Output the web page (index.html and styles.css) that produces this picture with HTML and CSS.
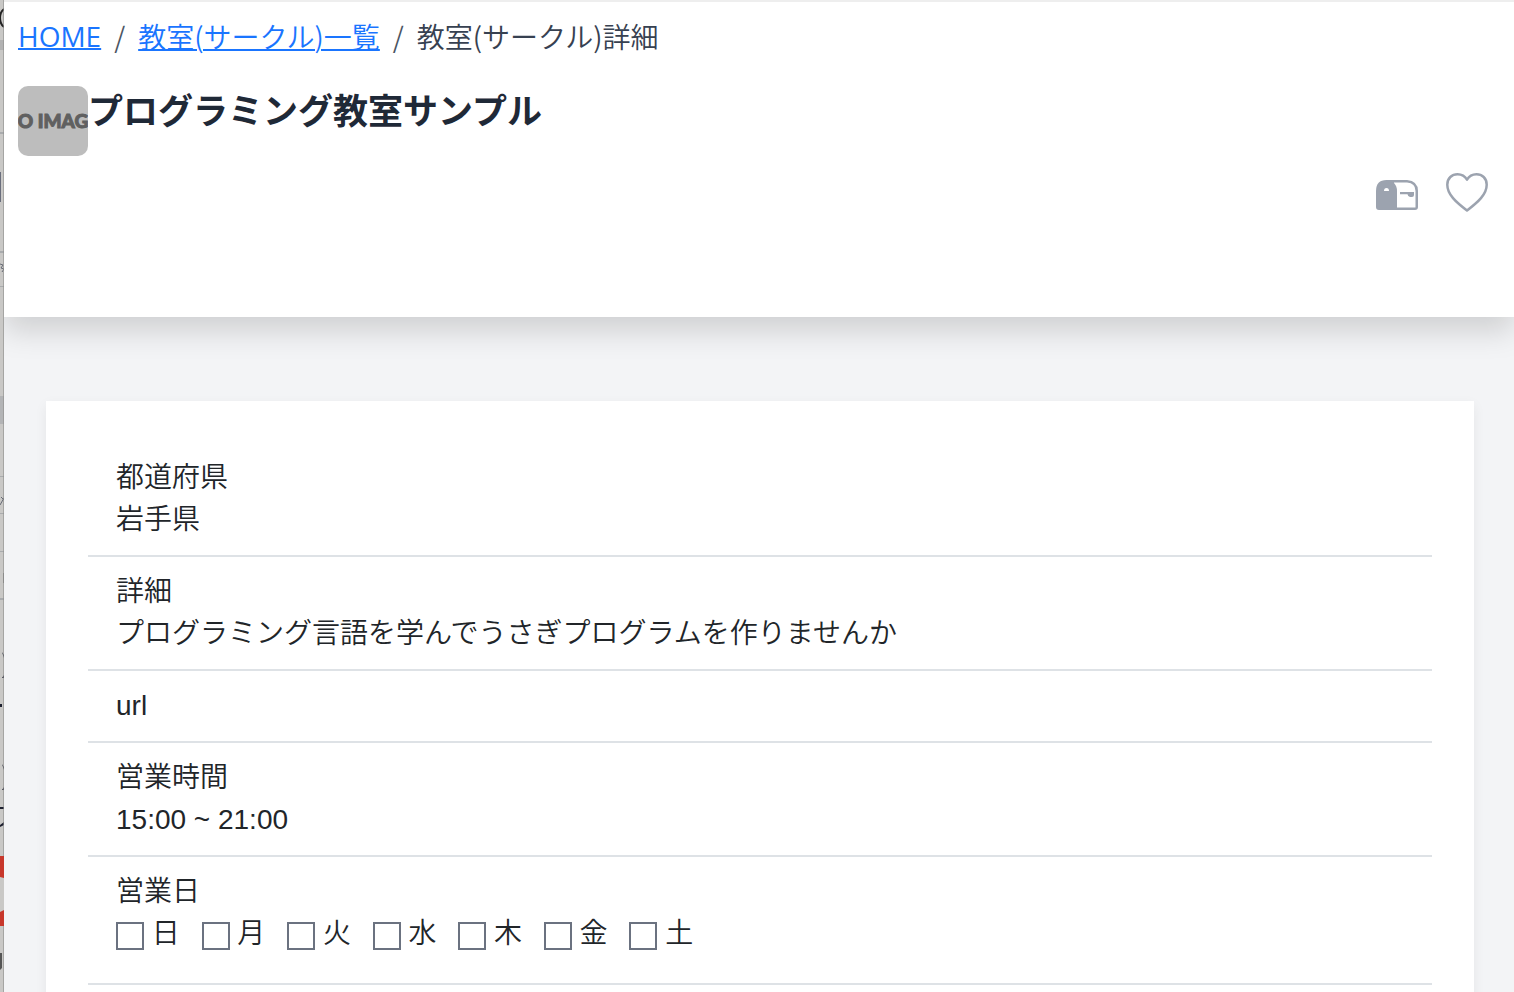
FILE: index.html
```html
<!DOCTYPE html>
<html lang="ja">
<head>
<meta charset="utf-8">
<meta name="viewport" content="width=device-width, initial-scale=1">
<title>教室(サークル)詳細</title>
<link rel="stylesheet" href="styles.css">
</head>
<body>
<div class="shell">
  <aside class="edge" aria-hidden="true">
    <svg class="edge-art" width="4" height="992" viewBox="0 0 4 992">
      <rect width="4" height="992" fill="#c9c8c6"/>
      <path d="M4 9Q0 12 0 18T4 27" fill="none" stroke="#222" stroke-width="2"/>
      <path d="M0 40h4v10H0z" fill="#b2b2b2"/>
      <path d="M0 132h4v2H0zM0 251h4v2H0zM0 286h4v1H0zM0 476h4v1H0zM0 513h4v1H0zM0 551h4v1H0zM0 598h4v2H0z" fill="#a9abad"/>
      <path d="M0 172h1v30H0z" fill="#6a6e7c"/>
      <path d="M0 264l3 1-2 3 3 1-2 3M0 505l4-7M1 497l3 3" fill="none" stroke="#666a74"/>
      <path d="M0 396h4v28H0z" fill="#b3b4b6"/>
      <path d="M3 573h1v10H3z" fill="#888"/>
      <path d="M2 652l2 3v3zM2 678l2-3v3zM0 704h2v3H0zM2 764l2 3v3zM2 790l2-3v3zM0 807h4v2H0zM0 825l4-3v3l-4 2z" fill="#1d2030"/>
      <path d="M0 856h4v22l-4-1zM0 912l4-2v16H0z" fill="#c7372b"/>
      <path d="M0 953h2v15l-2 2z" fill="#555"/>
      <path d="M3 0h1v856H3zM3 926h1v66H3z" fill="#8d8d8c" opacity=".6"/>
    </svg>
  </aside>
  <div class="page">
    <header class="page-header">
      <nav aria-label="パンくずリスト">
        <ol class="breadcrumb">
          <li class="home"><a href="#">HOME</a></li>
          <li><a href="#">教室(サークル)一覧</a></li>
          <li aria-current="page">教室(サークル)詳細</li>
        </ol>
      </nav>
      <div class="heading">
        <div class="thumb"><span>O IMAG</span></div>
        <h1>プログラミング教室サンプル</h1>
      </div>
      <div class="actions">
        <button type="button" aria-label="メッセージ">
          <svg width="42" height="42" viewBox="0 0 42 42">
            <path d="M10.500 9H31Q42 10 42 20V36Q42 39 39 39H3Q0 39 0 36V20Q0 9 10.500 9ZM18 12Q21 15 21 20V36.500H39.500V20Q39.500 12 31 11.500H18ZM8 20H13Q13 17 10.500 17T8 20Z" fill="#9ca3af" fill-rule="evenodd"/>
            <path d="M24 21h14v3q0 2-2 2h-2q-2 0-2.500-2.800H24z" fill="#9ca3af"/>
          </svg>
        </button>
        <button type="button" aria-label="お気に入り">
          <svg width="42" height="42" viewBox="0 0 42 42">
            <path d="M21 39.500C10 31 1.300 23.500 1.300 13.700C1.300 7 6 3.300 11.500 3.300C16 3.300 19 5.200 21 8.700C23 5.200 26 3.300 30.500 3.300C36 3.300 40.700 7 40.700 13.700C40.700 23.500 32 31 21 39.500Z" fill="none" stroke="#9ca3af" stroke-width="2.500" stroke-linejoin="round"/>
          </svg>
        </button>
      </div>
    </header>
    <main class="content">
      <section class="card">
        <dl class="details">
          <div class="item"><dt>都道府県</dt><dd>岩手県</dd></div>
          <div class="item"><dt>詳細</dt><dd>プログラミング言語を学んでうさぎプログラムを作りませんか</dd></div>
          <div class="item"><dt>url</dt></div>
          <div class="item"><dt>営業時間</dt><dd>15:00 ~ 21:00</dd></div>
          <div class="item"><dt>営業日</dt>
            <dd class="days">
              <label><input type="checkbox"> 日</label>
              <label><input type="checkbox"> 月</label>
              <label><input type="checkbox"> 火</label>
              <label><input type="checkbox"> 水</label>
              <label><input type="checkbox"> 木</label>
              <label><input type="checkbox"> 金</label>
              <label><input type="checkbox"> 土</label>
            </dd>
          </div>
        </dl>
      </section>
    </main>
  </div>
</div>
</body>
</html>
```
FILE: styles.css
```css
* {
  box-sizing: border-box;
}

body {
  margin: 0;
  background: #f3f4f6;
  color: #212529;
  font-family: "Liberation Sans", "Noto Sans CJK JP", sans-serif;
  font-size: 28px;
  font-weight: 350;
  line-height: 42px;
}

.shell {
  display: grid;
  grid-template-columns: 4px minmax(0, 1fr);
  height: 100vh;
  overflow: hidden;
}

.edge {
  position: relative;
  z-index: 1;
  overflow: hidden;
  background: #c9c8c6;
}

.edge-art {
  display: block;
}

.page {
  min-width: 0;
}

.page-header {
  min-height: 317px;
  padding: 13px 14px;
  border-top: 2px solid #eeeeee;
  background: #ffffff;
  box-shadow: 0 14px 28px rgba(0, 0, 0, 0.15);
}

.breadcrumb {
  display: flex;
  margin: 0 0 29px;
  padding: 0;
  list-style: none;
  color: #374151;
  font-family: "Noto Sans CJK JP", sans-serif;
}

.breadcrumb .home {
  font-family: "Open Sans", sans-serif;
  font-weight: 400;
}

.breadcrumb li + li::before {
  content: "/";
  padding: 0 13px;
  color: #4b5563;
}

.breadcrumb a {
  color: #1a75ff;
  text-decoration: underline;
  text-decoration-thickness: 2px;
}

.heading {
  display: flex;
}

.thumb {
  display: flex;
  flex: none;
  align-items: center;
  justify-content: center;
  width: 70px;
  height: 70px;
  overflow: hidden;
  border-radius: 10px;
  background: #bdbdbd;
  color: #606060;
  font-family: Lato, sans-serif;
  font-size: 19px;
  font-weight: 900;
  white-space: nowrap;
  -webkit-text-stroke: 1px #606060;
}

h1 {
  margin: 0;
  padding-top: 1px;
  color: #1f2937;
  font-size: 35px;
  font-weight: 700;
  line-height: 49px;
}

.actions {
  display: flex;
  justify-content: flex-end;
  gap: 28px;
  padding: 15px 12px 0 0;
}

.actions button {
  width: 42px;
  height: 42px;
  padding: 0;
  border: 0;
  background: none;
}

.actions svg {
  display: block;
}

.content {
  padding: 84px 40px 0 42px;
}

.card {
  padding: 42px;
  background: #ffffff;
  box-shadow: 0 4px 12px rgba(0, 0, 0, 0.06);
}

.details,
.details dd {
  margin: 0;
}

.item {
  padding: 14px 28px;
  border-bottom: 2px solid #dee2e6;
}

.details .days {
  padding-bottom: 14px;
}

.days label {
  margin-right: 14px;
}

.days input {
  appearance: none;
  width: 28px;
  height: 28px;
  margin: 0;
  border: 2px solid #6b7280;
  background: #ffffff;
  vertical-align: -7px;
}
```
